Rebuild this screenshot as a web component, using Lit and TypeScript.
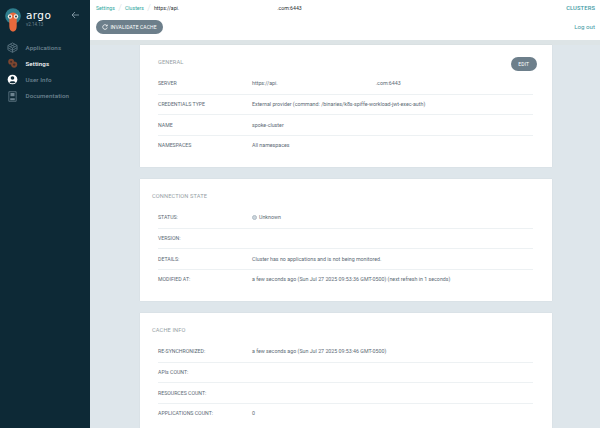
import { LitElement, html, css, svg } from 'lit';
import { customElement } from 'lit/decorators.js';

const navIcons = {
  apps: svg`<g fill="none" stroke="#5f7885" stroke-width="0.900"><path d="M6 1 11 3.800V8.500L6 11.300 1 8.500V3.800Z"/><path d="M1 3.800 6 6.500 11 3.800M6 6.500V11.300M3.500 2.400 8.500 5.200M8.500 2.400 3.500 5.200M1 6.200 6 9 11 6.200"/></g>`,
  settings: svg`<g fill="#7c4630"><circle cx="4.500" cy="4" r="3.200"/><circle cx="7.800" cy="7.200" r="3.400"/></g><g fill="#3d2d2b"><circle cx="4.500" cy="4" r="1.100"/><circle cx="7.800" cy="7.200" r="1.300"/></g>`,
  user: svg`<circle cx="6" cy="6" r="5.300" fill="#fff"/><circle cx="6" cy="4.400" r="2" fill="#0d2936"/><path d="M2.600 9.300C3.400 7.300 8.600 7.300 9.400 9.300 8.400 10.500 3.600 10.500 2.600 9.300Z" fill="#0d2936"/>`,
  docs: svg`<path d="M2 0.800h8v10.400H2Z" fill="none" stroke="#6d8491" stroke-width="0.800"/><path d="M3.800 2.300h4.400v3.400H3.800ZM3.500 8h5v2h-5Z" fill="#6d8491"/>`,
};

const nav = [
  { label: 'Applications', icon: navIcons.apps, active: false },
  { label: 'Settings', icon: navIcons.settings, active: true },
  { label: 'User Info', icon: navIcons.user, active: false },
  { label: 'Documentation', icon: navIcons.docs, active: false },
];

const cards = [
  {
    title: 'GENERAL',
    edit: true,
    rows: [
      ['SERVER', 'server'],
      ['CREDENTIALS TYPE', 'External provider (command: /binaries/k8s-spiffe-workload-jwt-exec-auth)'],
      ['NAME', 'spoke-cluster'],
      ['NAMESPACES', 'All namespaces'],
    ],
  },
  {
    title: 'CONNECTION STATE',
    rows: [
      ['STATUS:', 'unknown'],
      ['VERSION:', ''],
      ['DETAILS:', 'Cluster has no applications and is not being monitored.'],
      ['MODIFIED AT:', 'a few seconds ago (Sun Jul 27 2025 09:53:36 GMT-0500) (next refresh in 1 seconds)'],
    ],
  },
  {
    title: 'CACHE INFO',
    rows: [
      ['RE-SYNCHRONIZED:', 'a few seconds ago (Sun Jul 27 2025 09:53:46 GMT-0500)'],
      ['APIs COUNT:', ''],
      ['RESOURCES COUNT:', ''],
      ['APPLICATIONS COUNT:', '0'],
    ],
  },
];

@customElement('app-root')
export class AppRoot extends LitElement {
  static styles = css`
    :host {
      display: flex;
      width: 600px;
      height: 428px;
      overflow: hidden;
      font-family: Roboto, 'Liberation Sans', sans-serif;
      background: #dee6eb;
      color: #5c6a75;
    }

    .sidebar {
      width: 90px;
      flex: none;
      background: #0d2936;
      color: #6d8491;
    }

    .brand {
      display: flex;
      align-items: flex-start;
      height: 39.500px;
      padding-left: 5px;
      box-sizing: border-box;
    }

    .logo {
      width: 16px;
      height: 24px;
      margin-top: 8px;
      flex: none;
    }

    .wordmark {
      margin-left: 5px;
      padding-top: 9px;
    }

    .word {
      font-family: 'DejaVu Sans', sans-serif;
      font-size: 10.500px;
      line-height: 12px;
      letter-spacing: 0.400px;
      color: #fff;
    }

    .version {
      margin-top: 1px;
      font-size: 4.500px;
      line-height: 6px;
      white-space: nowrap;
    }

    .back {
      margin-left: 20px;
      margin-top: 11px;
    }

    .nav {
      display: flex;
      flex-direction: column;
    }

    .nav-item {
      display: flex;
      align-items: center;
      gap: 7.500px;
      height: 16.200px;
      padding-left: 7px;
      font-size: 6.200px;
      font-weight: 500;
      letter-spacing: 0.100px;
    }

    .nav-item.active {
      color: #fff;
    }

    .nav-item svg {
      width: 11px;
      height: 11px;
      flex: none;
    }

    .main {
      flex: 1;
      min-width: 0;
    }

    .top {
      background: #fff;
      height: 40px;
      padding: 0 5px 0 6px;
      display: flex;
      flex-direction: column;
    }

    .top-row {
      display: flex;
      justify-content: space-between;
      align-items: center;
    }

    .top-row.first {
      height: 16px;
    }

    .top-row.second {
      height: 22px;
    }

    .crumbs {
      display: flex;
      align-items: center;
      font-size: 5.200px;
      color: #2a2f33;
      white-space: nowrap;
    }

    .crumbs a {
      color: #2ea8a0;
    }

    .crumbs i {
      width: 10px;
      text-align: center;
      font-style: normal;
      font-size: 9px;
      font-weight: 300;
      line-height: 9px;
      color: #d3dbe0;
    }

    .redacted {
      display: inline-block;
      width: 98px;
    }

    .kind {
      font-size: 5.800px;
      font-weight: 500;
      color: #3f9ba5;
      letter-spacing: 0.100px;
    }

    .logout {
      font-size: 6.200px;
      color: #3f9ba5;
    }

    .btn {
      display: inline-flex;
      align-items: center;
      justify-content: center;
      border-radius: 7px;
      background: #6d7f8b;
      color: #fff;
      height: 14px;
      font-size: 5px;
      letter-spacing: 0.100px;
    }

    .invalidate {
      width: 67px;
      gap: 2px;
    }

    .content {
      height: 388px;
      padding: 5px 48px 0 50px;
      display: flex;
      flex-direction: column;
      gap: 12px;
      overflow: hidden;
      background: linear-gradient(#dde4e6 5px, transparent 5px);
    }

    .card {
      flex: none;
      position: relative;
      height: 122px;
      padding: 0 18px;
      background: #fff;
      box-shadow: 0 0 1px rgba(0, 0, 0, 0.1);
    }

    .card.wide-title h2 {
      margin-left: -6px;
    }

    .card h2 {
      margin: 0;
      height: 28px;
      padding-top: 14px;
      box-sizing: border-box;
      font-size: 5.700px;
      line-height: 7px;
      font-weight: 400;
      color: #979fa6;
      letter-spacing: 0.100px;
    }

    .edit {
      position: absolute;
      top: 12px;
      right: 15.500px;
      width: 25.500px;
    }

    .row {
      display: grid;
      grid-template-columns: 94px 1fr;
      align-items: center;
      height: 20.500px;
      margin-right: 1px;
      border-top: 1px solid #edf1f3;
      box-sizing: border-box;
      font-size: 5.200px;
      white-space: nowrap;
    }

    .row:first-of-type {
      border-top: 0;
    }

    .value {
      font-size: 5.300px;
    }

    .status {
      display: flex;
      align-items: center;
      gap: 2px;
    }

    .dot {
      width: 5px;
      height: 5px;
      border-radius: 50%;
      background: #ccd6dd;
      border: 1px solid #b0bcc5;
      box-sizing: border-box;
    }
  `;

  private value(v: string) {
    if (v === 'unknown') {
      return html`<span class="value status"><span class="dot"></span>Unknown</span>`;
    }
    if (v === 'server') {
      return html`<span class="value">https://api.<span class="redacted"></span>.com:6443</span>`;
    }
    return html`<span class="value">${v}</span>`;
  }

  render() {
    return html`
      <aside class="sidebar">
        <div class="brand">
          <svg class="logo" viewBox="0 0 16 24">
            <circle cx="8" cy="8" r="7.800" fill="#2f7f8f"/>
            <path d="M4.300 7C4.300 3.500 11.700 3.500 11.700 7V18C11.700 21 10.500 23.500 8 23.500S4.300 21 4.300 18Z" fill="#e8693c"/>
            <circle cx="5" cy="8.500" r="2.200" fill="#f3ece3"/>
            <circle cx="11" cy="8.500" r="2.200" fill="#f3ece3"/>
            <circle cx="5" cy="8.500" r="0.900" fill="#1c2b33"/>
            <circle cx="11" cy="8.500" r="0.900" fill="#1c2b33"/>
          </svg>
          <div class="wordmark">
            <div class="word">argo</div>
            <div class="version">v2.14.13</div>
          </div>
          <svg class="back" width="9" height="8" viewBox="0 0 9 8" fill="none" stroke="#8fa4b1" stroke-width="0.800">
            <path d="M8 4H1M4 1 1 4 4 7"/>
          </svg>
        </div>
        <nav class="nav">
          ${nav.map(
            (n) => html`<div class="nav-item ${n.active ? 'active' : ''}">
              <svg viewBox="0 0 12 12">${n.icon}</svg><span>${n.label}</span>
            </div>`,
          )}
        </nav>
      </aside>
      <div class="main">
        <header class="top">
          <div class="top-row first">
            <div class="crumbs">
              <a>Settings</a><i>/</i><a>Clusters</a><i>/</i
              ><span>https://api.<span class="redacted"></span>.com:6443</span>
            </div>
            <span class="kind">CLUSTERS</span>
          </div>
          <div class="top-row second">
            <span class="btn invalidate">
              <svg width="6" height="6" viewBox="0 0 6 6" fill="none" stroke="#fff" stroke-width="0.800">
                <path d="M5 1.800A2.300 2.300 0 1 0 5.300 3.500M5.200 0.600V2H3.800"/>
              </svg>
              INVALIDATE CACHE
            </span>
            <span class="logout">Log out</span>
          </div>
        </header>
        <section class="content">
          ${cards.map(
            (c) => html`<div class="card ${c.edit ? '' : 'wide-title'}">
              <h2>${c.title}</h2>
              ${c.edit ? html`<span class="btn edit">EDIT</span>` : ''}
              ${c.rows.map(
                ([k, v]) => html`<div class="row">
                  <span>${k}</span>
                  ${this.value(v)}
                </div>`,
              )}
            </div>`,
          )}
        </section>
      </div>
    `;
  }
}
